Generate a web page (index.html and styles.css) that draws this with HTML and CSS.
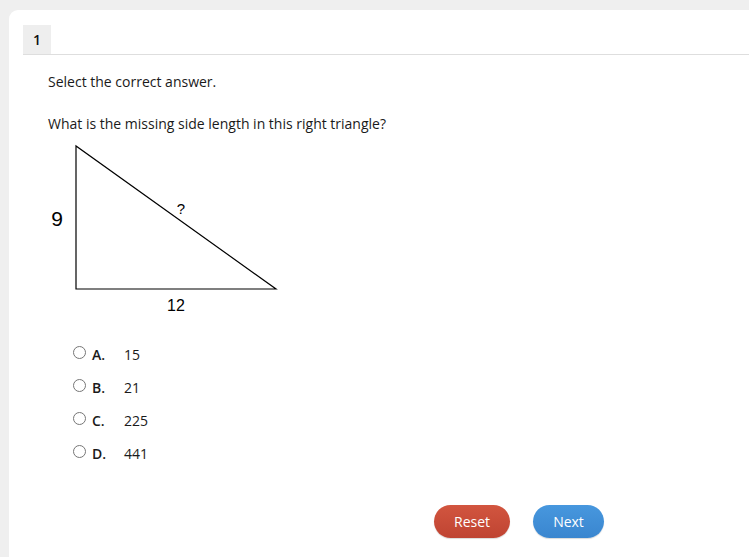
FILE: index.html
```html
<!DOCTYPE html>
<html>
<head>
<meta charset="utf-8">
<link rel="stylesheet" href="styles.css">
</head>
<body>
<div class="card">
  <div class="tabs"><div class="tab">1</div></div>
  <div class="content">
    <p class="instr">Select the correct answer.</p>
    <p class="question">What is the missing side length in this right triangle?</p>
    <svg class="figure" width="250" height="180" viewBox="0 0 250 180">
      <polygon points="28,6 28,149 228,149" fill="none" stroke="#000" stroke-width="1.2"/>
      <text x="9" y="86" text-anchor="middle" font-family="Liberation Sans, Arial, sans-serif" font-size="21">9</text>
      <text x="133" y="74" text-anchor="middle" font-family="Liberation Sans, Arial, sans-serif" font-size="15">?</text>
      <text x="128" y="171" text-anchor="middle" font-family="Liberation Sans, Arial, sans-serif" font-size="16">12</text>
    </svg>
    <div class="options">
      <label class="opt"><input type="radio" name="a"><span class="letter">A.</span><span class="val">15</span></label>
      <label class="opt"><input type="radio" name="a"><span class="letter">B.</span><span class="val">21</span></label>
      <label class="opt"><input type="radio" name="a"><span class="letter">C.</span><span class="val">225</span></label>
      <label class="opt"><input type="radio" name="a"><span class="letter">D.</span><span class="val">441</span></label>
    </div>
    <div class="actions">
      <button class="btn reset">Reset</button>
      <button class="btn next">Next</button>
    </div>
  </div>
</div>
</body>
</html>
```
FILE: styles.css
```css
html, body {
  margin: 0;
  padding: 0;
  background: #efefef;
  font-family: "Open Sans", sans-serif;
  color: #1a1a1a;
  overflow: hidden;
}
.card {
  margin: 10px 0 0 9px;
  width: 760px;
  height: 547px;
  background: #fff;
  border-radius: 9px 0 0 0;
  padding: 15px 0 0 14px;
  box-sizing: border-box;
}
.tabs {
  border-bottom: 1px solid #dedede;
  height: 29px;
  display: flex;
}
.tab {
  width: 28px;
  height: 29px;
  background: #eeeeee;
  font-size: 14px;
  font-weight: 600;
  display: flex;
  align-items: center;
  justify-content: center;
  color: #111;
}
.content {
  padding-left: 25px;
}
.instr, .question {
  margin: 0;
  font-size: 14px;
  line-height: 19px;
}
.instr { margin-top: 17px; }
.question { margin-top: 23px; }
.figure {
  display: block;
  margin-top: 7px;
}
.options {
  margin-top: 25px;
  padding-left: 24px;
  display: flex;
  flex-direction: column;
  gap: 14px;
}
.opt {
  display: flex;
  align-items: center;
  height: 19px;
  font-size: 14px;
  line-height: 19px;
}
.opt input {
  margin: 0 6px 0 1px;
  width: 13px;
  height: 13px;
  position: relative;
  top: -2px;
}
.letter {
  font-weight: 600;
  width: 32px;
}
.actions {
  display: flex;
  gap: 23px;
  margin-top: 42px;
  padding-left: 386px;
}
.btn {
  border: none;
  color: #fff;
  font-family: "Open Sans", sans-serif;
  font-size: 14px;
  height: 33px;
  border-radius: 17px;
  padding: 0;
  box-shadow: 0 1px 1px rgba(0,0,0,0.15);
}
.reset {
  width: 76px;
  background: linear-gradient(#d2553f, #bf4432);
}
.next {
  width: 71px;
  background: linear-gradient(#4797de, #3a86cf);
}
```
